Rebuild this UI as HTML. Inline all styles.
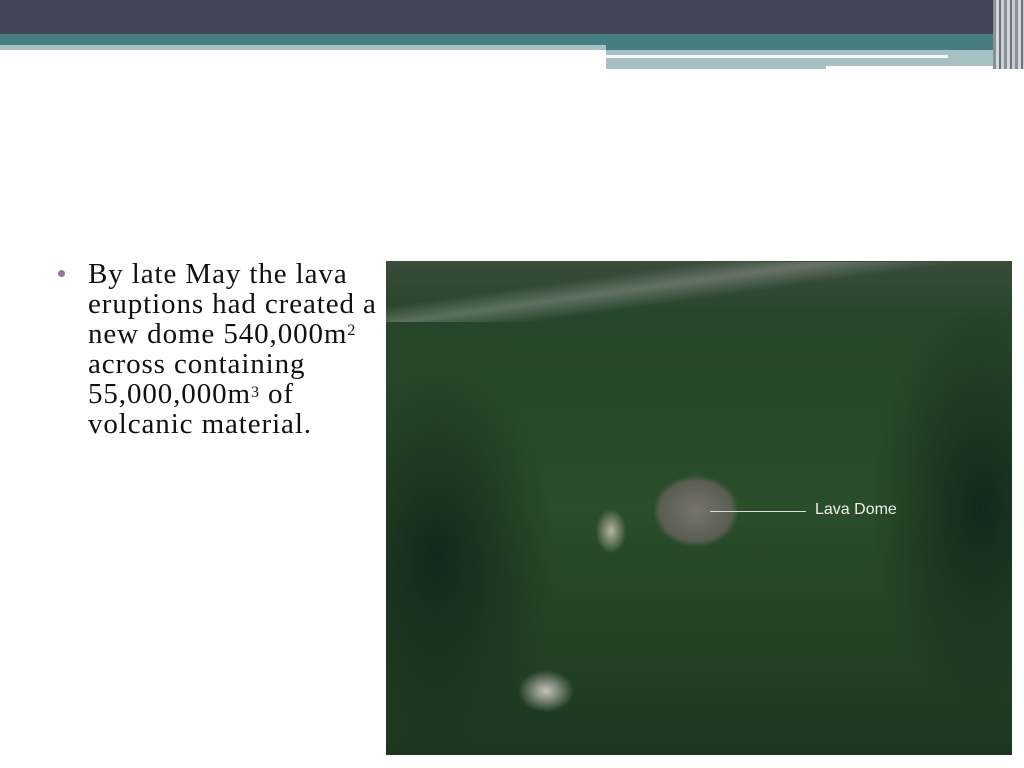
<!DOCTYPE html>
<html><head><style>
body{margin:0;width:1024px;height:768px;position:relative;background:#fff;overflow:hidden;font-family:"Liberation Serif",serif}
.a{position:absolute}
</style></head><body>
<div class="a" style="left:0;top:0;width:1024px;height:34px;background:#434356"></div>
<div class="a" style="left:0;top:34px;width:1024px;height:11px;background:#457d82"></div>
<div class="a" style="left:0;top:45px;width:606px;height:5px;background:#a5c1c4"></div>
<div class="a" style="left:606px;top:45px;width:418px;height:5px;background:#457d82"></div>
<div class="a" style="left:606px;top:50px;width:400px;height:19px;background:#a5c1c4"></div>
<div class="a" style="left:606px;top:55px;width:342px;height:3px;background:#f4f8f8"></div>
<div class="a" style="left:826px;top:66px;width:180px;height:3px;background:#fff"></div>
<div class="a" style="left:993px;top:0;width:31px;height:69px;background:repeating-linear-gradient(90deg,#8a8f9a 0 3px,#d0d8da 3px 6px,#6c7180 6px 8px,#c8ced2 8px 11px)"></div>
<div class="a" style="left:386px;top:261px;width:626px;height:494px;background:
radial-gradient(ellipse 40px 30px at 160px 430px,#c8c4bc,transparent 70%),
radial-gradient(ellipse 22px 32px at 225px 270px,#b9b4a4,transparent 70%),
radial-gradient(ellipse 120px 200px at 8% 60%,#13281a,transparent),
radial-gradient(ellipse 110px 200px at 95% 50%,#13281a,transparent),
linear-gradient(180deg,#3a4c3a 0,#26452a 12%,#2a4d2a 50%,#1d3620 100%);"></div>
<div class="a" style="left:386px;top:261px;width:626px;height:494px;background:radial-gradient(ellipse 60px 50px at 310px 250px,#76746c,#5a5e52 60%,transparent 72%)"></div>
<div class="a" style="left:386px;top:262px;width:626px;height:60px;background:linear-gradient(172deg,transparent 30%,rgba(190,190,190,.35) 42%,transparent 55%)"></div>
<div class="a" style="left:710px;top:511px;width:96px;height:1px;background:#ddd"></div>
<div class="a" style="left:815px;top:501px;color:#eee;font-family:'Liberation Sans',sans-serif;font-size:16px">Lava Dome</div>
<div class="a" style="left:58px;top:270px;width:7px;height:7px;border-radius:50%;background:#9b6fa0"></div>
<div class="a" style="left:88px;top:259px;font-size:29px;letter-spacing:0.9px;line-height:30px;color:#111;width:320px;white-space:nowrap">By late May the lava<br>eruptions had created a<br>new dome 540,000m<sup style="font-size:16px;vertical-align:8px;line-height:0">2</sup><br>across containing<br>55,000,000m<sup style="font-size:16px;vertical-align:6px;line-height:0">3</sup> of<br>volcanic material.</div>
</body></html>
